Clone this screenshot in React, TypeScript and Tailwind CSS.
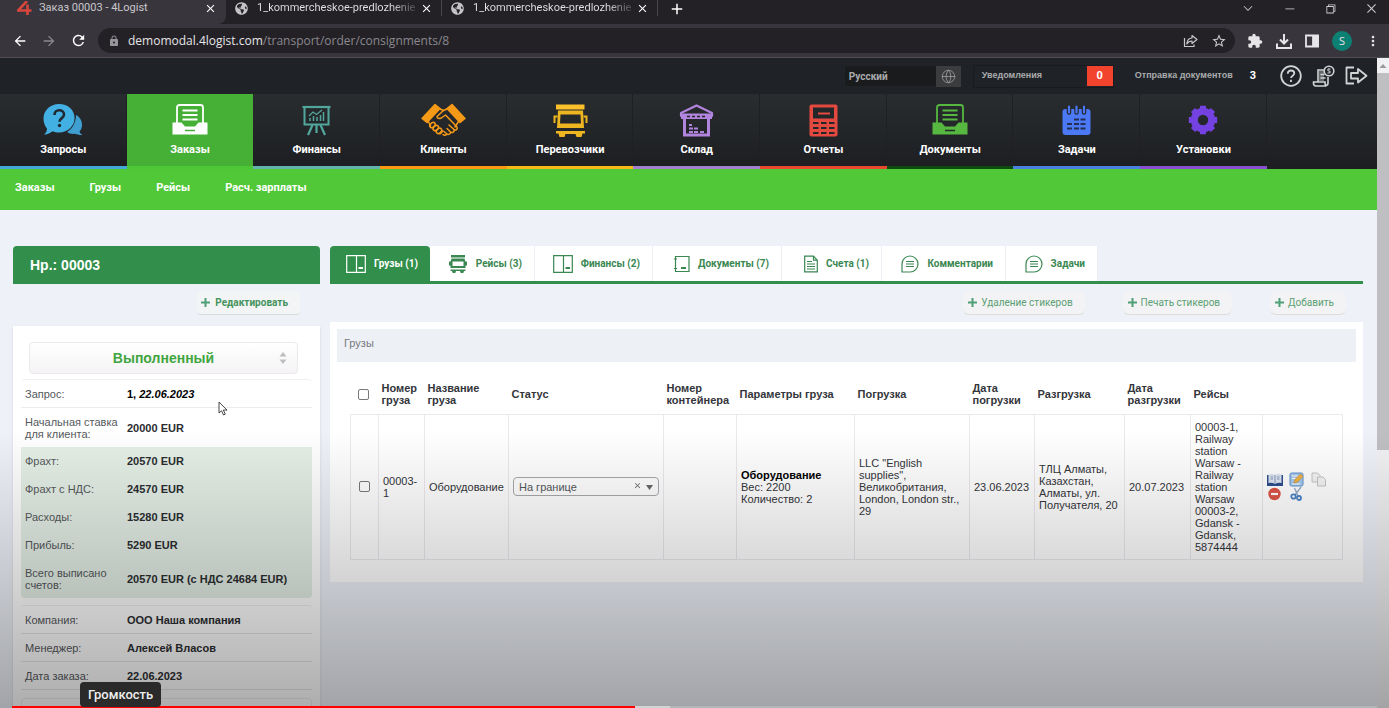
import { useState, type ReactNode } from "react";
import { FaGlobeAmericas } from "react-icons/fa";
import {
  MdAdd,
  MdArrowBack,
  MdArrowForward,
  MdClose,
  MdExtension,
  MdLock,
  MdMoreVert,
  MdRefresh,
  MdStarBorder,
} from "react-icons/md";
import {
  VscChevronDown,
  VscChromeClose,
  VscChromeMinimize,
  VscChromeRestore,
} from "react-icons/vsc";
import { Globe } from "lucide-react";

const ChatIcon = () => (
  <svg width="41" height="32" viewBox="0 0 41 32" aria-hidden>
    <path
      d="M33 11c4 2 6 6 6 10 0 3-1 5-2.500 6.500.3 1.500 1.500 2.500 3 3.300-3 .5-6 0-7.500-1-3 .4-6-.3-8-1.800C29 25 33 19 33 11z"
      fill="#3f9fd0"
    />
    <path
      d="M16 0c9 0 15.500 6 15.500 14S25 28.500 16 28.500c-2.500 0-4.500-.3-6.500-1.200C7 29.500 3.500 31 1 30.500c2-1.500 3-3.500 3-6C1.800 22 .5 18.500.5 14.500.5 6.500 7 0 16 0z"
      fill="#42b0e2"
    />
    <path
      d="M11.500 11c0-3 2-4.700 4.700-4.700s4.800 1.700 4.800 4.300c0 3.600-4.500 3.500-4.500 7.200"
      fill="none"
      stroke="#1f2a33"
      strokeWidth="2.600"
    />
    <circle cx="16.500" cy="21.500" r="1.700" fill="#1f2a33" />
  </svg>
);

const InboxIcon = ({ color, fill }: { color: string; fill: string }) => (
  <svg width="36" height="32" viewBox="0 0 36 32" aria-hidden>
    <path d="M5 19V3.500Q5 1 7.500 1h21Q31 1 31 3.500V19" fill="none" stroke={color} strokeWidth="1.800" />
    <path d="M10.500 6.500h15M10.500 11h15M10.500 15.500h15" stroke={color} strokeWidth="1.800" />
    <path d="M.5 18.500h9l3.500 4h10l3.500-4h9v12h-35z" fill={color} />
    <path d="M13 26.500h10" stroke={fill} strokeWidth="1.500" />
  </svg>
);

const BoardIcon = () => (
  <svg width="29" height="32" viewBox="0 0 29 32" fill="none" stroke="#52a79d" aria-hidden>
    <path d="M.5 3h28" strokeWidth="2.200" />
    <path d="M2.500 3v17.500h24V3" strokeWidth="2" />
    <path d="M8 17v-3M11.500 17v-5M15 17v-4M18.500 17v-6M21.500 17V8" strokeWidth="1.500" />
    <path d="M7 12l4-4 3.500 2.500L20 6" strokeWidth="1.200" />
    <path d="M10.500 21L6 31M18.500 21L23 31M14.500 21v8" strokeWidth="2.200" />
  </svg>
);

const HandshakeIcon = () => (
  <svg width="45" height="34" viewBox="0 0 45 34" fill="none" stroke="#f59a17" strokeWidth="1.500" strokeLinejoin="round" strokeLinecap="round" aria-hidden>
    <path d="M1 15.500L14 1.500l5 4L6 19.500z" fill="#f59a17" />
    <path d="M44 15.500L31 1.500l-5 4L39 19.500z" fill="#f59a17" />
    <path d="M19 6l3.500 1.500L26 6M7.500 18.500l2 4.500M37.500 18.500L34 24" />
    <path d="M22.500 7.500l-6.500 6c0 2.500 3.500 2.500 5 1l3.500-2.500L36 24c1 2-1.500 4-3 2.500" />
    <path d="M28 22l5 4.500c1 2-2 4-3.500 2.500L26 25.500M29.500 29c.5 2-2.500 3-3.500 2l-3-2.500M26 31c-1 1.500-3 1.500-4 .5" />
    <rect x="8.500" y="20" width="6" height="4" rx="2" transform="rotate(-45 11.500 22)" />
    <rect x="11.800" y="23" width="6" height="4" rx="2" transform="rotate(-45 14.800 25)" />
    <rect x="15" y="25.800" width="6" height="4" rx="2" transform="rotate(-45 18 27.800)" />
    <path d="M19 31l3-3" />
  </svg>
);

const TruckIcon = () => (
  <svg width="35" height="33" viewBox="0 0 35 33" aria-hidden>
    <path d="M3 .500h28.500V5.500H3z" fill="#fbc02a" />
    <path d="M5 6.500h25l1 17.500H4zM7.500 10.500L7 19.500h21l-.5-9z" fill="#edb51f" fillRule="evenodd" />
    <path d="M4.500 12.500H1.500V19M30.500 12.500h3V19" fill="none" stroke="#edb51f" strokeWidth="2" />
    <path d="M3 27h29v2.500h-2.500l-1 3.500h-5l-1-3h-10l-1 3h-5l-1-3.500H3z" fill="#edb51f" />
  </svg>
);

const WarehouseIcon = () => (
  <svg width="35" height="33" viewBox="0 0 35 33" aria-hidden>
    <path d="M2 12V9L17.500 1.500 33 9v3z" fill="none" stroke="#b184dd" strokeWidth="2.200" strokeLinejoin="round" />
    <path d="M2 9.500h31V15h-2v17.500H4V15H2zM7 15v14.500h21V15z" fill="#b184dd" fillRule="evenodd" />
    <path d="M8 12.500h19" stroke="#24272a" strokeWidth="1.500" strokeDasharray="3 2" />
    <path d="M10 20h3v2h-3zM10 23.500h4v2h-4zM15 23.500h4v2h-4zM10 27h4v2h-4zM15 27h4v2h-4zM21 27h4v2h-4z" fill="#b184dd" />
  </svg>
);

const CalculatorIcon = () => (
  <svg width="29" height="33" viewBox="0 0 29 33" aria-hidden>
    <rect x=".5" y=".5" width="28" height="32" rx="2" fill="#e4493f" />
    <path d="M4 3.500h21v11H4z" fill="#24272a" />
    <path d="M9 9.500h12" stroke="#e4493f" strokeWidth="2" />
    <path d="M4 19h5.500M12 19h5.500M20 19h5.500M4 24h5.500M12 24h5.500M20 24h5.500M4 29h5.500M12 29h5.500M20 29h5.500" stroke="#24272a" strokeWidth="2" />
  </svg>
);

const CalendarIcon = () => (
  <svg width="29" height="30" viewBox="0 0 29 30" aria-hidden>
    <rect x=".5" y="4" width="28" height="26" rx="3" fill="#4b79f6" />
    <path d="M7 1.500v6M14.500 1.500v6M22 1.500v6" stroke="#24272a" strokeWidth="4.500" strokeLinecap="round" />
    <path d="M7 1.500v6M14.500 1.500v6M22 1.500v6" stroke="#4b79f6" strokeWidth="2.200" strokeLinecap="round" />
    <path d="M12 14.500h5M18.500 14.500h5M5 19h5M12 19h5M18.500 19h5M5 23.500h5M12 23.500h5M18.500 23.500h5" stroke="#24304f" strokeWidth="2.200" />
  </svg>
);

const GearIcon = () => (
  <svg width="30" height="30" viewBox="0 0 30 30" aria-hidden>
    <circle cx="15" cy="15" r="8.700" fill="none" stroke="#7442e0" strokeWidth="7" />
    <g stroke="#7442e0" strokeWidth="6" strokeLinejoin="round">
      <path d="M15 .8v5M15 24.200v5M.8 15h5M24.200 15h5" />
      <path d="M5 5l3.500 3.500M21.500 21.500L25 25M5 25l3.500-3.500M21.500 8.500L25 5" />
    </g>
  </svg>
);

const ContainerIcon = () => (
  <svg width="20" height="18" viewBox="0 0 20 18" fill="none" stroke="currentColor" aria-hidden>
    <path d="M.7.700h18.600v16.600H.7zM10.500.700v16.600" strokeWidth="1.200" />
    <path d="M12.500 13h4.500" strokeWidth="2" />
  </svg>
);

const TripIcon = () => (
  <svg width="20" height="20" viewBox="0 0 20 20" fill="currentColor" aria-hidden>
    <path d="M3 1h14v2.500H3z" />
    <path d="M3.500 4.500h13l.8 3H19v4h-1.500V14h-15v-2.500H1v-4h1.700zM4.500 7.500v4.500h11V7.500z" fillRule="evenodd" />
    <path d="M2.500 15.500h15v1.500H16l-.7 2h-2.600l-.7-2H8l-.7 2H4.700L4 17H2.500z" />
  </svg>
);

const SafeIcon = () => (
  <svg width="17" height="18" viewBox="0 0 17 18" fill="none" stroke="currentColor" aria-hidden>
    <path d="M2.500 1.500h13.500v15H2.500zM1 4h3M1 13.500h3" strokeWidth="1.200" />
    <path d="M8 13h5" strokeWidth="2" />
  </svg>
);

const InvoiceIcon = () => (
  <svg width="14" height="18" viewBox="0 0 14 18" fill="none" stroke="currentColor" aria-hidden>
    <path d="M.7 1.200h8.800l3.800 4v11.600H.7zM9.500 1.200v4h3.800" strokeWidth="1.200" />
    <path d="M3 6.500h5M3 9h8M3 11.500h8M3 14h8" strokeWidth="1.100" />
  </svg>
);

const CommentIcon = () => (
  <svg width="18" height="18" viewBox="0 0 18 18" fill="none" stroke="currentColor" aria-hidden>
    <path d="M1 17V9a8 8 0 1 1 8 8z" strokeWidth="1.200" />
    <path d="M5 6.500h8M5 9h8M5 11.500h8" strokeWidth="1.200" />
  </svg>
);

const PlusIcon = () => (
  <svg width="9" height="9" viewBox="0 0 9 9" aria-hidden>
    <path d="M4.500 0v9M0 4.500h9" stroke="#4f9f77" strokeWidth="2" />
  </svg>
);

const navItems = [
  { label: "Запросы", icon: <ChatIcon />, line: "border-[#45a6d8]" },
  { label: "Заказы", icon: <InboxIcon color="#fff" fill="#45b035" />, line: "border-[#4cc736]", active: true },
  { label: "Финансы", icon: <BoardIcon />, line: "border-[#63b2ac]" },
  { label: "Клиенты", icon: <HandshakeIcon />, line: "border-[#fb9a12]" },
  { label: "Перевозчики", icon: <TruckIcon />, line: "border-[#f5b915]" },
  { label: "Склад", icon: <WarehouseIcon />, line: "border-[#a37fd0]" },
  { label: "Отчеты", icon: <CalculatorIcon />, line: "border-[#e8482f]" },
  { label: "Документы", icon: <InboxIcon color="#56b840" fill="#24272a" />, line: "border-[#0d4a10]" },
  { label: "Задачи", icon: <CalendarIcon />, line: "border-[#4a80e0]" },
  { label: "Установки", icon: <GearIcon />, line: "border-[#8a4fd0]" },
];

const subNav = ["Заказы", "Грузы", "Рейсы", "Расч. зарплаты"];

const tabs = [
  { label: "Грузы (1)", icon: <ContainerIcon />, width: "w-[100px]" },
  { label: "Рейсы (3)", icon: <TripIcon />, width: "w-[105px]" },
  { label: "Финансы (2)", icon: <ContainerIcon />, width: "w-[118px]" },
  { label: "Документы (7)", icon: <SafeIcon />, width: "w-[129px]" },
  { label: "Счета (1)", icon: <InvoiceIcon />, width: "w-[100px]" },
  { label: "Комментарии", icon: <CommentIcon />, width: "w-[124px]" },
  { label: "Задачи", icon: <CommentIcon />, width: "w-[92px]" },
];

const finance = [
  ["Фрахт:", "20570 EUR"],
  ["Фрахт с НДС:", "24570 EUR"],
  ["Расходы:", "15280 EUR"],
  ["Прибыль:", "5290 EUR"],
  ["Всего выписано счетов:", "20570 EUR (с НДС 24684 EUR)"],
];

const details = [
  ["Компания:", "ООО Наша компания"],
  ["Менеджер:", "Алексей Власов"],
  ["Дата заказа:", "22.06.2023"],
];

const columns = [
  { title: "Номер груза", width: "w-[46px]" },
  { title: "Название груза", width: "w-[84px]" },
  { title: "Статус", width: "w-[155px]" },
  { title: "Номер контейнера", width: "w-[73px]" },
  { title: "Параметры груза", width: "w-[118px]" },
  { title: "Погрузка", width: "w-[115px]" },
  { title: "Дата погрузки", width: "w-[65px]" },
  { title: "Разгрузка", width: "w-[90px]" },
  { title: "Дата разгрузки", width: "w-[66px]" },
  { title: "Рейсы", width: "w-[72px]" },
];

const BrowserTab = ({ title }: { title: string }) => (
  <div className="flex w-[216px] items-center border-r border-[#4a484e] pr-2 pl-[9px]">
    <FaGlobeAmericas size={13} className="shrink-0 text-[#c4c3c7]" aria-hidden />
    <span className="ml-[9px] bg-linear-to-r from-[#e6e5e8] from-85% to-[#4a484e] bg-clip-text font-['Roboto',sans-serif] whitespace-nowrap text-transparent">
      {title}
    </span>
    <button aria-label="Закрыть вкладку" className="ml-auto text-white">
      <MdClose size={13} aria-hidden />
    </button>
  </div>
);

const BrowserChrome = () => (
  <header className="shrink-0 bg-[#232126] font-['Open_Sans',sans-serif] text-[11px] text-[#e6e5e8]">
    <div className="flex h-6">
      <div className="flex w-[226px] items-center rounded-br-lg bg-[#38353c] pr-[9px] pb-2 pl-[17px]">
        <svg width="16" height="14" viewBox="0 0 16 14" aria-hidden>
          <path d="M10 0L1 9.500h13.500M10.500 3.500V14" fill="none" stroke="#d8463c" strokeWidth="2.600" />
        </svg>
        <span className="ml-[6px] font-['Roboto',sans-serif] whitespace-nowrap text-[#c9c8cc]">Заказ 00003 - 4Logist</span>
        <button aria-label="Закрыть вкладку" className="ml-auto text-white">
          <MdClose size={13} aria-hidden />
        </button>
      </div>
      <div className="flex pb-2">
        <BrowserTab title="1_kommercheskoe-predlozhenie" />
        <BrowserTab title="1_kommercheskoe-predlozhenie" />
        <button aria-label="Новая вкладка" className="ml-[10px] text-white">
          <MdAdd size={18} aria-hidden />
        </button>
      </div>
      <div className="ml-auto flex items-center gap-7 pr-[11px] pb-2 text-[#d0cfd3]">
        <button aria-label="Поиск вкладок">
          <VscChevronDown size={14} aria-hidden />
        </button>
        <button aria-label="Свернуть">
          <VscChromeMinimize size={13} aria-hidden />
        </button>
        <button aria-label="Восстановить">
          <VscChromeRestore size={13} aria-hidden />
        </button>
        <button aria-label="Закрыть">
          <VscChromeClose size={13} aria-hidden />
        </button>
      </div>
    </div>
    <div className="flex h-[34px] items-center border-b border-[#504e54] bg-[#38353c] pr-2 pl-3">
      <div className="flex gap-[13px] text-white">
        <button aria-label="Назад">
          <MdArrowBack size={16} aria-hidden />
        </button>
        <button aria-label="Вперёд" className="text-[#8a888e]">
          <MdArrowForward size={16} aria-hidden />
        </button>
        <button aria-label="Обновить">
          <MdRefresh size={17} aria-hidden />
        </button>
      </div>
      <div className="ml-[11px] flex h-[25px] flex-1 items-center rounded-full bg-[#232126] pr-2 pl-[10px]">
        <MdLock size={12} className="text-[#97959b]" aria-hidden />
        <a href="#" className="ml-2 text-[12px] text-[#8a888e]">
          <span className="text-[#e6e5e8]">demomodal.4logist.com</span>/transport/order/consignments/8
        </a>
        <div className="ml-auto flex items-center gap-[13px] text-[#c9c8cc]">
          <button aria-label="Поделиться">
            <svg width="15" height="14" viewBox="0 0 15 14" fill="none" stroke="currentColor" strokeWidth="1.200" strokeLinejoin="round" aria-hidden>
              <path d="M1.500 4v8.500h9.500V10.500" />
              <path d="M9 1.500l5 4-5 4V7C6.500 7 5 8 3.800 10 4 6.500 6 4.200 9 4z" />
            </svg>
          </button>
          <button aria-label="В закладки">
            <MdStarBorder size={16} aria-hidden />
          </button>
        </div>
      </div>
      <div className="ml-3 flex items-center gap-[13px] text-[#e6e5e8]">
        <button aria-label="Расширения">
          <MdExtension size={16} aria-hidden />
        </button>
        <button aria-label="Загрузки">
          <svg width="16" height="16" viewBox="0 0 16 16" fill="none" stroke="currentColor" strokeWidth="2" aria-hidden>
            <path d="M8 1v9M4 6.500L8 10.500l4-4M1 10.500V15h14v-4.500" />
          </svg>
        </button>
        <button aria-label="Боковая панель">
          <svg width="14" height="14" viewBox="0 0 14 14" fill="none" stroke="currentColor" strokeWidth="1.800" aria-hidden>
            <path d="M1 1.500h12v11H1z" />
            <path d="M8 2h5v10H8z" fill="currentColor" />
          </svg>
        </button>
        <button aria-label="Профиль" className="size-5 rounded-full bg-[#0d8074] text-center leading-5">
          S
        </button>
        <button aria-label="Меню">
          <MdMoreVert size={16} aria-hidden />
        </button>
      </div>
    </div>
  </header>
);

const TopBar = () => (
  <div className="flex h-9 items-center justify-end bg-[#1f2226] pr-[9px] text-[9px] font-bold text-[#a9abad]">
    <select aria-label="Язык" className="h-5 w-[91px] appearance-none bg-[#1a1b1d] pl-1 font-['Roboto',sans-serif] text-[10px]">
      <option>Русский</option>
    </select>
    <button aria-label="Сменить язык" className="flex h-[21px] w-[25px] items-center justify-center bg-[#3a3c3e]">
      <Globe size={15} strokeWidth={1.500} className="text-[#8f9193]" aria-hidden />
    </button>
    <a href="#" className="ml-3 flex h-[23px] w-[141px] items-center justify-between border border-[#191b1e] pl-2">
      Уведомления
      <span className="w-[26px] bg-[#f2432f] text-center font-['Roboto',sans-serif] text-[11px] leading-5 text-white">0</span>
    </a>
    <a href="#" className="ml-[21px] flex items-center gap-[17px]">
      Отправка документов
      <span className="font-['Roboto',sans-serif] text-[11px] text-white">3</span>
    </a>
    <div className="ml-6 flex items-center gap-[10px] text-[#d3d4d5]">
      <button aria-label="Помощь">
        <svg width="22" height="22" viewBox="0 0 22 22" fill="none" stroke="currentColor" strokeWidth="1.800" aria-hidden>
          <circle cx="11" cy="11" r="9.800" />
          <path d="M7.800 8.800c0-2.300 1.500-3.300 3.200-3.300s3.300 1 3.300 2.800c0 2.400-3.200 2.400-3.200 4.700M11 14.800v2.200" />
        </svg>
      </button>
      <button aria-label="Счета к оплате">
        <svg width="23" height="22" viewBox="0 0 23 22" fill="none" stroke="currentColor" strokeWidth="1.600" aria-hidden>
          <path d="M12 5H6v12M16 12v6c0 3-3 3-3 0v-1H1.500v1c0 2 1 3 2.500 3h10.500M8.500 9.500h4M8.500 13h5" />
          <path d="M7 6h5v10H7z" fill="currentColor" fillOpacity=".4" stroke="none" />
          <circle cx="17" cy="6" r="4.800" />
          <path d="M18.500 4.200c-3-1-3.500 1.500-1.500 1.800s1.500 2.600-1.500 1.700" strokeWidth="1.100" />
        </svg>
      </button>
      <button aria-label="Выход">
        <svg width="23" height="20" viewBox="0 0 23 20" fill="none" stroke="currentColor" strokeWidth="1.800" aria-hidden>
          <path d="M9 1.500H1.500v16H9M6 7h7V3l8.500 6.700L13 16.500v-4H6z" strokeLinejoin="round" />
        </svg>
      </button>
    </div>
  </div>
);

const InfoRow = ({ label, children, tall }: { label: string; children: ReactNode; tall?: boolean }) => (
  <tr className={tall ? "h-[39px]" : "h-7"}>
    <th className="w-[102px] pl-1 text-left font-normal text-[#55585c]">{label}</th>
    <td className="pl-1 font-bold text-[#2b2d30]">{children}</td>
  </tr>
);

const Sidebar = () => (
  <aside className="w-[307px] shrink-0">
    <h1 className="h-[38px] rounded-t bg-[#318f4b] pl-[17px] text-[14px] leading-[38px] font-bold text-white">
      Нр.: 00003
    </h1>
    <div className="flex h-[42px] justify-end pt-[7px] pr-5">
      <button className="flex h-6 items-center gap-[5px] rounded border-b border-[#d9dadc] bg-[#f3f4f6] pr-3 pl-1 font-['Roboto',sans-serif] text-[10px] font-bold text-[#44935c]">
        <PlusIcon />
        Редактировать
      </button>
    </div>
    <div className="bg-white px-2 pt-4 shadow-sm">
      <div className="relative mr-[14px] ml-2">
        <select
          aria-label="Статус заказа"
          className="block h-8 w-full appearance-none rounded border border-[#ece9ed] bg-linear-to-b from-white to-[#f5f3f5] text-center text-[14px] font-bold text-[#41a53f]"
        >
          <option>Выполненный</option>
        </select>
        <svg className="pointer-events-none absolute top-[10px] right-[11px]" width="8" height="12" viewBox="0 0 8 12" aria-hidden>
          <path d="M4 0l3.500 4.500h-7zM4 12L.5 7.500h7z" fill="#bdbdc0" />
        </svg>
      </div>
      <table className="mt-[5px] w-full border-separate border-spacing-0 rounded border-t border-[#f1eff3] leading-3 [&_tr:first-child>*]:border-b [&_tr:first-child>*]:border-[#ececf0]">
        <tbody>
          <InfoRow label="Запрос:">
            <span className="text-black">
              1, <i>22.06.2023</i>
            </span>
          </InfoRow>
          <InfoRow label="Начальная ставка для клиента:" tall>
            20000 EUR
          </InfoRow>
        </tbody>
      </table>
      <table className="w-full rounded-b bg-[#e4efe6] leading-3">
        <tbody>
          {finance.map(([label, value], index) => (
            <InfoRow key={label} label={label} tall={index === finance.length - 1}>
              {value}
            </InfoRow>
          ))}
        </tbody>
      </table>
      <table className="mt-[7px] w-full border-separate border-spacing-0 rounded border-t border-[#eeecf0] leading-3 [&_tr>*]:border-b [&_tr>*]:border-[#e6e5e9]">
        <tbody>
          {details.map(([label, value]) => (
            <InfoRow key={label} label={label}>
              {value}
            </InfoRow>
          ))}
        </tbody>
      </table>
      <div className="mt-2 h-16 rounded border border-[#eeecf0]" />
    </div>
  </aside>
);

const RowActions = () => (
  <div className="grid w-[60px] grid-cols-3 gap-x-[6px]">
    <button aria-label="Просмотр">
      <svg width="16" height="14" viewBox="0 0 16 14" aria-hidden>
        <path d="M0 2h16v11H0z" fill="#2d4f8e" />
        <path d="M1.500 1.500Q5 0 8 2q3-2 6.500-.5V10Q11 9 8 11 5 9 1.500 10z" fill="#dde5f1" />
        <path d="M8 2v9M3.500 4H6M3.500 6H6M10 4h2.500M10 6h2.500" stroke="#8599bd" />
      </svg>
    </button>
    <button aria-label="Изменить">
      <svg width="15" height="15" viewBox="0 0 15 15" aria-hidden>
        <rect x="1" y="1" width="13" height="13" rx="1.500" fill="#a7c9ee" stroke="#5c90cc" />
        <path d="M3 4h6M3 6.500h4M3 12h8" stroke="#fff" />
        <path d="M5 11l1-3.500L11.500 2 14 4.500 8.500 10z" fill="#efb443" stroke="#c98a27" strokeWidth=".6" />
      </svg>
    </button>
    <button aria-label="Копировать">
      <svg width="16" height="15" viewBox="0 0 16 15" fill="#f3f3f3" stroke="#c4c4c6" aria-hidden>
        <path d="M1 1h5.500L9 3.500V10H1z" />
        <path d="M6.500 5H12l2.500 2.500V14h-8z" />
      </svg>
    </button>
    <button aria-label="Удалить">
      <svg width="15" height="14" viewBox="0 0 15 14" aria-hidden>
        <circle cx="7.500" cy="7" r="6.200" fill="#dd5546" />
        <path d="M4 7h7" stroke="#fff" strokeWidth="2.200" />
      </svg>
    </button>
    <button aria-label="Разделить">
      <svg width="15" height="14" viewBox="0 0 15 14" fill="none" stroke="#4c84c4" strokeWidth="1.800" aria-hidden>
        <path d="M12 0L6 8M5.500 1l3.500 8" stroke="#8fa6c4" strokeWidth="1.300" />
        <circle cx="4.500" cy="9.500" r="2.200" />
        <circle cx="10" cy="11" r="2" />
      </svg>
    </button>
  </div>
);

const CargoTable = () => (
  <table className="w-full table-fixed border-collapse text-left leading-3 text-[#33353a]">
    <thead>
      <tr className="h-[39px]">
        <th className="w-7 pl-[3px]">
          <input type="checkbox" aria-label="Выбрать все" className="ml-1 block size-[11px] appearance-none rounded-xs border border-[#77797d] bg-white" />
        </th>
        {columns.map(({ title, width }) => (
          <th key={title} className={`pl-[3px] ${width}`}>
            {title}
          </th>
        ))}
        <th aria-label="Действия" />
      </tr>
    </thead>
    <tbody>
      <tr className="h-[145px] [&>td]:border [&>td]:border-[#ece8ee] [&>td]:pl-1">
        <td>
          <input type="checkbox" aria-label="Выбрать груз 00003-1" className="ml-1 block size-[11px] appearance-none rounded-xs border border-[#77797d] bg-white" />
        </td>
        <td className="pr-1">00003-1</td>
        <td>Оборудование</td>
        <td>
          <div className="relative mr-1">
            <select aria-label="Статус груза" className="block h-[19px] w-full appearance-none rounded border border-[#a9a9ad] pt-px pl-[5px] leading-none text-[#55575b]">
              <option>На границе</option>
            </select>
            <button aria-label="Очистить статус" className="absolute top-[4px] right-[17px] text-[#66686c]">
              <MdClose size={9} aria-hidden />
            </button>
            <svg className="pointer-events-none absolute top-[8px] right-[6px]" width="7" height="5" viewBox="0 0 7 5" aria-hidden>
              <path d="M0 0h7L3.500 5z" fill="#66686c" />
            </svg>
          </div>
        </td>
        <td />
        <td>
          <b className="text-black">Оборудование</b>
          <br />
          Вес: 2200
          <br />
          Количество: 2
        </td>
        <td>LLC "English supplies", Великобритания, London, London str., 29</td>
        <td>23.06.2023</td>
        <td>ТЛЦ Алматы, Казахстан, Алматы, ул. Получателя, 20</td>
        <td>20.07.2023</td>
        <td>
          00003-1, Railway station Warsaw - Railway station Warsaw
          <br />
          00003-2, Gdansk - Gdansk, 5874444
        </td>
        <td>
          <RowActions />
        </td>
      </tr>
    </tbody>
  </table>
);

const OrderMain = () => {
  const [activeTab, setActiveTab] = useState(0);

  return (
    <main className="min-w-0 flex-1">
      <div className="flex border-b-[3px] border-[#318f4b]" role="tablist">
        {tabs.map(({ label, icon, width }, index) => (
          <button
            key={label}
            role="tab"
            aria-selected={index === activeTab}
            onClick={() => setActiveTab(index)}
            className={`flex h-[35px] shrink-0 items-center justify-end gap-2 pr-3 font-['Roboto',sans-serif] text-[10px] font-bold whitespace-nowrap ${width} ${
              index === activeTab
                ? "rounded-t bg-[#318f4b] text-white"
                : "border-r border-[#eceef3] bg-white text-[#3b8752]"
            }`}
          >
            {icon}
            {label}
          </button>
        ))}
      </div>
      <div className="flex h-[38px] items-start justify-end gap-[38px] pt-[7px] pr-[17px] text-[10px] text-[#5b9f73]">
        {["Удаление стикеров", "Печать стикеров", "Добавить"].map((label) => (
          <button key={label} className="flex h-6 items-center gap-1 rounded-md border-b border-[#dddcdc] bg-[#f3f3f5] pr-3 pl-[5px] font-['Roboto',sans-serif]">
            <PlusIcon />
            {label}
          </button>
        ))}
      </div>
      <section className="bg-white px-[7px] pt-[7px] pb-[22px]">
        <h2 className="h-[33px] bg-[#edf0f5] pt-2 pl-[7px] leading-3 text-[#77797d]">Грузы</h2>
        <div className="px-[13px] pt-[13px]">
          <CargoTable />
        </div>
      </section>
    </main>
  );
};

const PlayerOverlay = () => (
  <div className="pointer-events-none absolute inset-x-0 bottom-0 h-[278px] bg-[linear-gradient(to_bottom,rgba(0,0,0,0),rgba(0,0,0,.08)_25%,rgba(0,0,0,.17)_54%,rgba(0,0,0,.32))]">
    <div className="absolute inset-x-3 bottom-0 flex h-[2px] bg-white/20">
      <div className="w-[623px] bg-[#f00]" />
      <div className="w-[35px] bg-white/40" />
    </div>
    <div role="tooltip" className="absolute bottom-[1px] left-20 rounded bg-[#2a2a2a] px-2 font-['Roboto',sans-serif] text-[13px] leading-[25px] font-medium text-[#eee]">
      Громкость
    </div>
  </div>
);

const App = () => (
  <div className="relative flex h-screen flex-col overflow-hidden bg-[#eef1f8] font-['Liberation_Sans',Arial,sans-serif] text-[11px]">
    <BrowserChrome />
    <div className="flex min-h-0 flex-1">
      <div className="min-w-0 flex-1 overflow-hidden">
        <TopBar />
        <div className="bg-linear-to-b from-[#2a2d30] to-[#1c1e22]">
          <nav className="grid w-[92%] grid-cols-10 font-['Roboto',sans-serif] font-bold text-white">
            {navItems.map(({ label, icon, line, active }) => (
              <a
                key={label}
                href="#"
                className={`flex h-[75px] flex-col items-center border-b-[3px] pt-[9px] ${line} ${
                  active ? "bg-[#45b035]" : "shadow-[inset_-1px_0_0_#1e2023]"
                }`}
              >
                <span className="flex h-[34px] items-center">{icon}</span>
                <span className="mt-[5px] leading-4">{label}</span>
              </a>
            ))}
          </nav>
        </div>
        <nav className="flex h-[41px] items-center gap-[35px] bg-[#50c837] pb-1 pl-[15px] font-['Roboto',sans-serif] leading-3 font-bold text-white">
          {subNav.map((label) => (
            <a key={label} href="#">
              {label}
            </a>
          ))}
        </nav>
        <div className="flex items-start gap-[10px] pt-9 pr-[14px] pl-[13px]">
          <Sidebar />
          <OrderMain />
        </div>
      </div>
      <div className="flex w-3 shrink-0 flex-col bg-[#f1f1f3]" aria-hidden>
        <svg className="h-[15px] w-3" viewBox="0 0 12 15">
          <path d="M6 6l3.500 4h-7z" fill="#9a9a9c" />
        </svg>
        <div className="h-[377px] bg-[#bfbfc1]" />
      </div>
    </div>
    <PlayerOverlay />
    {/* mouse pointer */}
    <svg className="pointer-events-none absolute top-[401px] left-[218px]" width="10" height="15" viewBox="0 0 10 15" aria-hidden>
      <path d="M1 1v11l2.500-2.300L5.500 14l1.800-.9-2-4H9z" fill="#fff" stroke="#333" strokeWidth=".9" />
    </svg>
  </div>
);

export default App;
